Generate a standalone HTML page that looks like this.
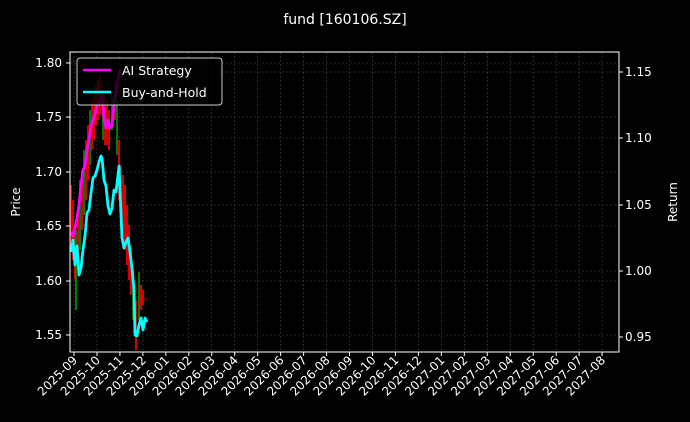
<!DOCTYPE html>
<html><head><style>body{margin:0;background:#000;}svg{display:block;font-family:"DejaVu Sans","Liberation Sans",sans-serif;}</style></head>
<body>
<svg width="690" height="422" viewBox="0 0 690 422">
<rect width="690" height="422" fill="#000"/>
<text x="345" y="24" fill="#fff" font-size="14" text-anchor="middle">fund [160106.SZ]</text>
<g stroke="#4a4a4a" stroke-width="0.6" stroke-dasharray="2,2">
<line x1="70" x2="619" y1="63" y2="63"/><line x1="70" x2="619" y1="117" y2="117"/><line x1="70" x2="619" y1="172" y2="172"/><line x1="70" x2="619" y1="226" y2="226"/><line x1="70" x2="619" y1="281" y2="281"/><line x1="70" x2="619" y1="335" y2="335"/>
<line x1="70" x2="619" y1="72" y2="72"/><line x1="70" x2="619" y1="138" y2="138"/><line x1="70" x2="619" y1="205" y2="205"/><line x1="70" x2="619" y1="271" y2="271"/>
</g>
<g id="vg" stroke="#4a4a4a" stroke-width="0.6" stroke-dasharray="2,2"></g>
<g stroke-width="1.8">
<line x1="71" x2="71" y1="185" y2="250" stroke="#e00"/><line x1="73" x2="73" y1="200" y2="260" stroke="#e00"/><line x1="75" x2="75" y1="225" y2="280" stroke="#e00"/><line x1="76" x2="76" y1="230" y2="310" stroke="#080"/><line x1="78" x2="78" y1="215" y2="270" stroke="#e00"/><line x1="80" x2="80" y1="180" y2="250" stroke="#080"/><line x1="82" x2="82" y1="170" y2="230" stroke="#e00"/><line x1="84" x2="84" y1="150" y2="215" stroke="#080"/><line x1="86" x2="86" y1="140" y2="200" stroke="#e00"/><line x1="88" x2="88" y1="125" y2="180" stroke="#e00"/><line x1="90" x2="90" y1="110" y2="165" stroke="#080"/><line x1="92" x2="92" y1="100" y2="150" stroke="#e00"/><line x1="94" x2="94" y1="95" y2="140" stroke="#e00"/><line x1="96" x2="96" y1="85" y2="125" stroke="#e00"/><line x1="98" x2="98" y1="80" y2="120" stroke="#e00"/><line x1="100" x2="100" y1="75" y2="115" stroke="#e00"/><line x1="103" x2="103" y1="90" y2="140" stroke="#080"/><line x1="105" x2="105" y1="95" y2="145" stroke="#e00"/><line x1="107" x2="107" y1="100" y2="145" stroke="#e00"/><line x1="109" x2="109" y1="110" y2="150" stroke="#e00"/><line x1="112" x2="112" y1="95" y2="130" stroke="#080"/><line x1="115" x2="115" y1="80" y2="120" stroke="#e00"/><line x1="117" x2="117" y1="100" y2="155" stroke="#080"/><line x1="119" x2="119" y1="140" y2="200" stroke="#e00"/><line x1="121" x2="121" y1="165" y2="225" stroke="#e00"/><line x1="123" x2="123" y1="175" y2="240" stroke="#e00"/><line x1="125" x2="125" y1="185" y2="250" stroke="#e00"/><line x1="127" x2="127" y1="205" y2="265" stroke="#e00"/><line x1="129" x2="129" y1="225" y2="280" stroke="#e00"/><line x1="131" x2="131" y1="245" y2="295" stroke="#e00"/><line x1="133" x2="133" y1="270" y2="320" stroke="#080"/><line x1="136" x2="136" y1="300" y2="350" stroke="#e00"/><line x1="139" x2="139" y1="272" y2="320" stroke="#080"/><line x1="141" x2="141" y1="285" y2="310" stroke="#e00"/><line x1="143" x2="143" y1="290" y2="305" stroke="#e00"/><line x1="146" x2="147" y1="299" y2="299" stroke="#e00"/>
</g>
<polyline fill="none" stroke="#ff00ff" stroke-width="2.8" stroke-linejoin="round" points="71,232 73,236 75,228 77,218 79,205 81,185 83,170 85,166 87,150 89,140 91,126 93,120 95,114 97,106 99,102 101,99 102,96 104,118 106,128 108,120 110,128 112,126 114,104 116,92 118,80 120,70"/>
<polyline fill="none" stroke="#00ffff" stroke-width="2.8" stroke-linejoin="round" points="71,252 73,240 75,265 77,246 79,275 81,268 83,250 85,236 87,213 89,210 91,193 93,178 95,176 97,170 99,162 101,156 102,158 104,180 106,186 108,206 110,214 112,208 114,190 116,192 118,175 119,166 120,190 122,238 124,248 126,242 128,238 130,252 132,268 134,290 135,335 137,336 139,325 141,318 143,330 145,318 147,322"/>
<rect x="70" y="52" width="549" height="300" fill="none" stroke="#fff" stroke-width="1"/>
<g fill="#fff" font-size="12">
<g text-anchor="end"><text x="62" y="67">1.80</text><text x="62" y="121">1.75</text><text x="62" y="176">1.70</text><text x="62" y="230">1.65</text><text x="62" y="285">1.60</text><text x="62" y="339">1.55</text></g>
<text x="625" y="76">1.15</text><text x="625" y="142">1.10</text><text x="625" y="209">1.05</text><text x="625" y="275">1.00</text><text x="625" y="341">0.95</text>
<text transform="translate(20,202) rotate(-90)" text-anchor="middle">Price</text>
<text transform="translate(677,202) rotate(-90)" text-anchor="middle">Return</text>
</g>
<g stroke="#fff" stroke-width="1"><line x1="66" x2="70" y1="63" y2="63"/><line x1="66" x2="70" y1="117" y2="117"/><line x1="66" x2="70" y1="172" y2="172"/><line x1="66" x2="70" y1="226" y2="226"/><line x1="66" x2="70" y1="281" y2="281"/><line x1="66" x2="70" y1="335" y2="335"/>
<line x1="619" x2="623" y1="72" y2="72"/><line x1="619" x2="623" y1="138" y2="138"/><line x1="619" x2="623" y1="205" y2="205"/><line x1="619" x2="623" y1="271" y2="271"/><line x1="619" x2="623" y1="337" y2="337"/></g>
<g id="xt"></g>
<rect x="77" y="58" width="145" height="47" rx="3" fill="#000" fill-opacity="0.8" stroke="#ccc" stroke-width="1"/>
<line x1="83" x2="111" y1="70" y2="70" stroke="#ff00ff" stroke-width="2.4"/>
<line x1="83" x2="111" y1="92" y2="92" stroke="#00ffff" stroke-width="2.4"/>
<text x="122" y="75" fill="#fff" font-size="12.5">AI Strategy</text>
<text x="122" y="97" fill="#fff" font-size="12.5">Buy-and-Hold</text>
</svg>
<script>
var labs=["2025-09","2025-10","2025-11","2025-12","2026-01","2026-02","2026-03","2026-04","2026-05","2026-06","2026-07","2026-08","2026-09","2026-10","2026-11","2026-12","2027-01","2027-02","2027-03","2027-04","2027-05","2027-06","2027-07","2027-08"];
var ns="http://www.w3.org/2000/svg",xt=document.getElementById("xt"),vg=document.getElementById("vg");
labs.forEach(function(l,i){var x=74+i*22.96;
var g=document.createElementNS(ns,"line");g.setAttribute("x1",x);g.setAttribute("x2",x);g.setAttribute("y1",52);g.setAttribute("y2",352);vg.appendChild(g);
var t=document.createElementNS(ns,"line");t.setAttribute("x1",x);t.setAttribute("x2",x);t.setAttribute("y1",352);t.setAttribute("y2",356);t.setAttribute("stroke","#fff");xt.appendChild(t);
var s=document.createElementNS(ns,"text");s.setAttribute("transform","translate("+(x+4)+",361) rotate(-45)");s.setAttribute("text-anchor","end");s.setAttribute("fill","#fff");s.setAttribute("font-size","12");s.textContent=l;xt.appendChild(s);});
</script>
</body></html>
